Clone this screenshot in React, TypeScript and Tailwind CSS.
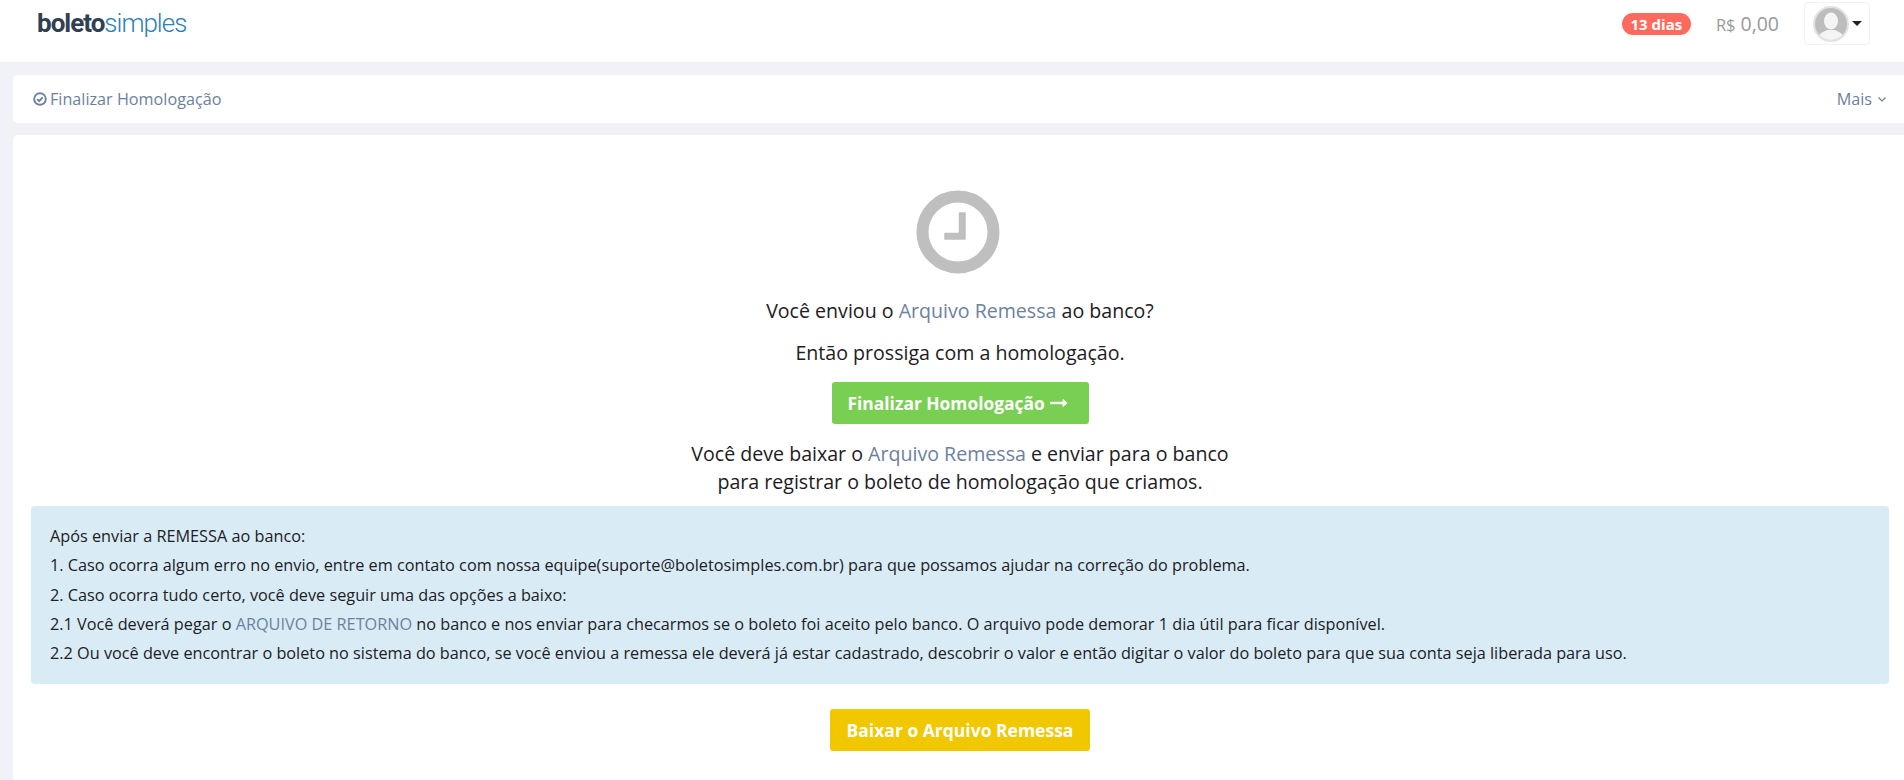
import React from "react";

const Link = ({ children }: { children: React.ReactNode }) => (
  <span className="text-[#6c819f]">{children}</span>
);

export default function App() {
  return (
    <div className="h-[780px] overflow-hidden bg-[#f0f2f7] flex flex-col text-[#1c2024] font-['Open_Sans',sans-serif]">
      <header className="h-[62px] shrink-0 bg-white pl-[37px] pr-[34px]">
        <div className="h-[47px] flex items-center">
          <div className="flex font-['Roboto',sans-serif] text-[26px] leading-none tracking-[-1px] -mt-[2px]">
            <span className="font-bold text-[#2f4052]">boleto</span>
            <span className="font-light text-[#2a80b9]">simples</span>
          </div>
          <div className="ml-auto flex items-center">
            <span className="h-[22px] w-[69px] text-center rounded-full bg-[#ff6a5f] text-white text-[15px] font-bold leading-[22px]">13 dias</span>
            <span className="ml-[25px] text-[#999] text-[19.5px] leading-none flex items-baseline"><span className="text-[16.5px] mr-[5px]">R$</span>0,00</span>
            <div className="ml-[25px] w-[66px] h-[43px] border border-[#f0f2f7] rounded-[4px] flex items-center pl-[8px]">
              <svg width="36" height="36" viewBox="0 0 36 36" className="shrink-0">
                <defs><clipPath id="c"><circle cx="18" cy="18" r="16" /></clipPath></defs>
                <circle cx="18" cy="18" r="18" fill="#e2e2e2" />
                <circle cx="18" cy="18" r="16" fill="#bdbdbd" />
                <g clipPath="url(#c)">
                  <ellipse cx="18" cy="15" rx="7" ry="8.5" fill="#f4f4f4" />
                  <path d="M4 36c0-8 6-10 10-12h8c4 2 10 4 10 12z" fill="#f4f4f4" />
                </g>
              </svg>
              <span className="ml-[3px] w-0 h-0 border-x-[5px] border-x-transparent border-t-[5px] border-t-[#222]" />
            </div>
          </div>
        </div>
      </header>

      <nav className="mt-[13px] ml-[13px] h-[48px] shrink-0 bg-white rounded-l-[5px] flex items-center justify-between pl-[20px] pr-[17px] text-[#6c819f] text-[16.2px]">
        <span className="flex items-center">
          <svg width="14" height="14" viewBox="0 0 14 14" className="mr-[3px]" fill="none" stroke="currentColor">
            <circle cx="7" cy="7" r="5.8" strokeWidth="1.9" />
            <path d="M4.2 7.1l2 2 3.6-3.7" strokeWidth="2" />
          </svg>
          Finalizar Homologação
        </span>
        <span className="flex items-center">
          Mais
          <svg width="10" height="10" viewBox="0 0 10 10" className="ml-[5px]" fill="none" stroke="currentColor" strokeWidth="1.2">
            <path d="M1.5 3.5L5 7l3.5-3.5" />
          </svg>
        </span>
      </nav>

      <main className="mt-[12px] ml-[13px] flex-1 bg-white rounded-tl-[5px] flex flex-col items-center pt-[55px] pl-[3px]">
        <svg width="84" height="84" viewBox="0 0 84 84" fill="none" className="-ml-[4px]">
          <circle cx="42" cy="42" r="35.5" stroke="#bfbfbf" strokeWidth="12" />
          <path d="M43.5 23h5.5v26H29v-5.5h14.5z" fill="#bfbfbf" stroke="#bfbfbf" strokeWidth="1.5" strokeLinejoin="round" />
        </svg>

        <p className="mt-[23px] text-[19.6px] leading-[28px]">Você enviou o <Link>Arquivo Remessa</Link> ao banco?</p>
        <p className="mt-[14px] text-[19.6px] leading-[28px]">Então prossiga com a homologação.</p>
        <button className="mt-[15px] h-[42px] w-[257px] rounded-[3px] bg-[#79cf52] text-white text-[17.4px] font-bold flex items-center pl-[16px]">
          Finalizar Homologação
          <svg width="18" height="10" viewBox="0 0 18 10" className="ml-[5px]" fill="none" stroke="white">
            <path d="M0 5h15" strokeWidth="2.4" />
            <path d="M13 1.5L17 5l-4 3.5z" fill="white" strokeWidth="1" />
          </svg>
        </button>
        <p className="mt-[16px] text-[19.6px] leading-[28px] text-center">
          Você deve baixar o <Link>Arquivo Remessa</Link> e enviar para o banco
          <br />
          para registrar o boleto de homologação que criamos.
        </p>

        <div className="mt-[10px] self-start ml-[15px] w-[1858px] h-[178px] rounded-[4px] bg-[#d9ecf6] pl-[19px] pt-[18px] text-[16.25px] leading-[24px]">
          <p className="mb-[5.25px]">Após enviar a REMESSA ao banco:</p>
          <p className="mb-[5.25px]">1. Caso ocorra algum erro no envio, entre em contato com nossa equipe(suporte@boletosimples.com.br) para que possamos ajudar na correção do problema.</p>
          <p className="mb-[5.25px]">2. Caso ocorra tudo certo, você deve seguir uma das opções a baixo:</p>
          <p className="mb-[5.25px]">2.1 Você deverá pegar o <Link>ARQUIVO DE RETORNO</Link> no banco e nos enviar para checarmos se o boleto foi aceito pelo banco. O arquivo pode demorar 1 dia útil para ficar disponível.</p>
          <p>2.2 Ou você deve encontrar o boleto no sistema do banco, se você enviou a remessa ele deverá já estar cadastrado, descobrir o valor e então digitar o valor do boleto para que sua conta seja liberada para uso.</p>
        </div>

        <button className="mt-[25px] h-[42px] w-[260px] rounded-[3px] bg-[#f1c800] text-white text-[17.5px] font-bold">Baixar o Arquivo Remessa</button>
      </main>
    </div>
  );
}
